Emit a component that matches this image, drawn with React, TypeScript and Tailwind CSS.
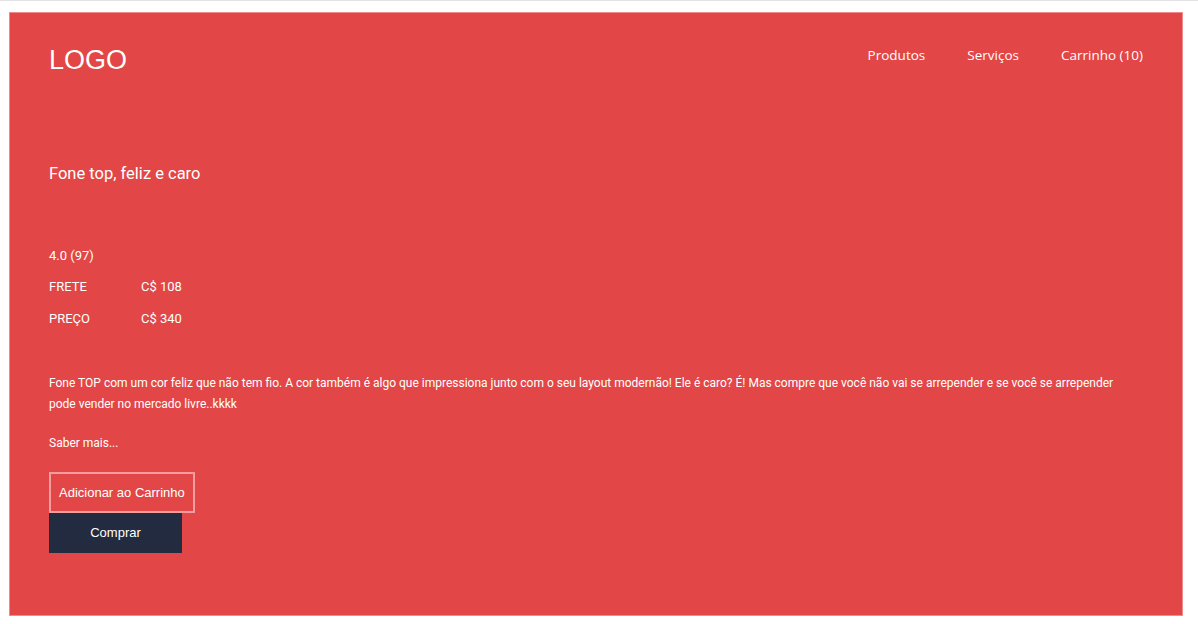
export default function App() {
  return (
    <div className="min-h-[624px] w-full bg-white border-t border-[#e3e3e3] pt-[11px] pl-[9px] pr-[15px] pb-[8px]">
      <div className="h-[604px] bg-[#e24646] border border-[#ee8a8a] px-[39px] pt-[30px] text-white font-['Roboto',sans-serif]">
        {/* Header */}
        <header className="flex items-start justify-between">
          <h1 className="font-['Liberation_Sans',Arial,sans-serif] text-[27px] leading-[32px] mt-[1px]">LOGO</h1>
          <nav className="flex gap-[42px] font-['Open_Sans',sans-serif] text-[13.5px] leading-[20px] pt-[2px]">
            <span>Produtos</span>
            <span>Serviços</span>
            <span>Carrinho (10)</span>
          </nav>
        </header>

        {/* Product */}
        <h2 className="mt-[88px] text-[16.5px] leading-[20px]">Fone top, feliz e caro</h2>

        <div className="mt-[64px] text-[13px] leading-[16px]">
          <p>4.0 (97)</p>
          <div className="flex mt-[15px]">
            <span className="w-[92px]">FRETE</span>
            <span>C$ 108</span>
          </div>
          <div className="flex mt-[16px]">
            <span className="w-[92px]">PREÇO</span>
            <span>C$ 340</span>
          </div>
        </div>

        <p className="mt-[46px] text-[12px] leading-[21px] pr-[20px]">
          Fone TOP com um cor feliz que não tem fio. A cor também é algo que impressiona junto com o seu layout modernão! Ele é caro? É! Mas compre que você não vai se arrepender e se você se arrepender pode vender no mercado livre..kkkk
        </p>

        <p className="mt-[20px] text-[12px] leading-[16px]">Saber mais...</p>

        <div className="mt-[21px] flex flex-col items-start font-['Liberation_Sans',Arial,sans-serif] text-[13px]">
          <button className="h-[41px] px-[8px] border-2 border-[#f59c9c] text-white">Adicionar ao Carrinho</button>
          <button className="h-[40px] w-[133px] bg-[#232b40] text-white">Comprar</button>
        </div>
      </div>
    </div>
  )
}
